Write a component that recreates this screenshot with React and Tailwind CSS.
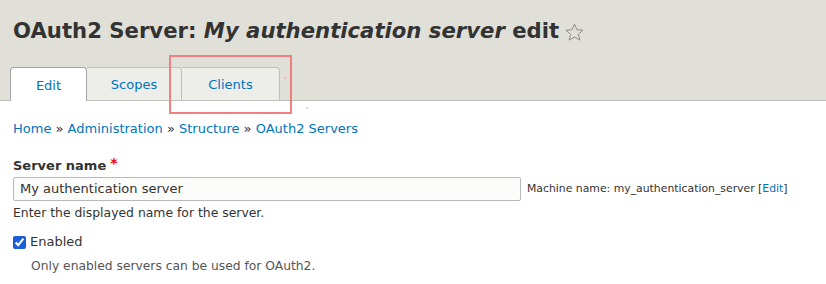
import React from "react";

function Star() {
  return (
    <svg width="21" height="21" viewBox="0 0 24 24" className="ml-[5px] mt-[2px]">
      <path
        d="M12 2.5l2.8 6.3 6.9.6-5.2 4.6 1.6 6.7L12 17.2l-6.1 3.5 1.6-6.7-5.2-4.6 6.9-.6z"
        fill="none"
        stroke="#8a8a86"
        strokeWidth="1.1"
        strokeLinejoin="miter"
      />
    </svg>
  );
}

export default function App() {
  const crumbs = ["Home", "Administration", "Structure", "OAuth2 Servers"];

  return (
    <div className="w-[826px] h-[284px] overflow-hidden bg-white text-[#333] font-['DejaVu_Sans',sans-serif]">
      {/* Header */}
      <div className="relative bg-[#e0e0d8] border-b border-[#bfbfba] h-[101px] pl-[13px]">
        <h1 className="flex items-center pt-[18px] text-[21.2px] font-bold leading-[26px] text-[#333]">
          <span>
            OAuth2 Server: <em>My authentication server</em> edit
          </span>
          <Star />
        </h1>
        <ul className="flex absolute left-[10px] bottom-[-1px]">
          <li className="w-[77px] h-[34px] pt-[2px] flex items-center justify-center bg-white border border-b-0 border-[#a6a6a6] rounded-t-[4px] text-[13px] text-[#0074bd]">
            Edit
          </li>
          <li className="w-[95px] h-[34px] pt-[2px] flex items-center justify-center bg-[#ededea] border border-l-0 border-[#bfbfba] rounded-tr-[4px] text-[13px] text-[#0074bd]">
            Scopes
          </li>
          <li className="w-[98px] h-[34px] pt-[2px] flex items-center justify-center bg-[#ededea] border border-l-0 border-[#bfbfba] rounded-tr-[4px] text-[13px] text-[#0074bd]">
            Clients
          </li>
        </ul>
        {/* highlight overlay */}
        <div className="absolute left-[169px] top-[55px] w-[123px] h-[59px] border-2 border-[#f08080] z-10" />
        <div className="absolute left-[284px] top-[77px] w-[2px] h-[2px] bg-[#f4b8b8]" />
        <div className="absolute left-[306px] top-[107px] w-[2px] h-[2px] bg-[#f8c8c8] z-10" />
      </div>

      <div className="px-[13px]">
        {/* Breadcrumb */}
        <div className="pt-[19px] text-[13px] leading-[18px]">
          {crumbs.map((c, i) => (
            <span key={c}>
              {i > 0 && <span className="text-[#333]"> » </span>}
              <a className="text-[#0074bd]">{c}</a>
            </span>
          ))}
        </div>

        {/* Server name */}
        <div className="mt-[20px]">
          <label className="block text-[13px] font-bold leading-[16px]">
            Server name
            <span className="text-[#e00] ml-[4px] align-top text-[14px] leading-[10px]">*</span>
          </label>
          <div className="flex items-center mt-[3px]">
            <div className="w-[508px] h-[24px] flex items-center px-[6px] bg-[#fcfcfa] border border-[#b8b8b8] rounded-[2px] text-[13px] text-[#333]">
              My authentication server
            </div>
            <span className="ml-[6px] text-[10.85px] text-[#333]">
              Machine name: my_authentication_server [<a className="text-[#0074bd]">Edit</a>]
            </span>
          </div>
          <div className="mt-[4px] text-[12.4px] leading-[16px] text-[#333]">
            Enter the displayed name for the server.
          </div>
        </div>

        {/* Enabled */}
        <div className="mt-[13px]">
          <div className="flex items-center">
            <input
              type="checkbox"
              defaultChecked
              className="w-[13px] h-[13px] m-0 accent-[#1a5fd8]"
            />
            <span className="ml-[4px] text-[13px] leading-[16px]">Enabled</span>
          </div>
          <div className="ml-[18px] mt-[8px] text-[12.3px] leading-[16px] text-[#555]">
            Only enabled servers can be used for OAuth2.
          </div>
        </div>
      </div>
    </div>
  );
}
